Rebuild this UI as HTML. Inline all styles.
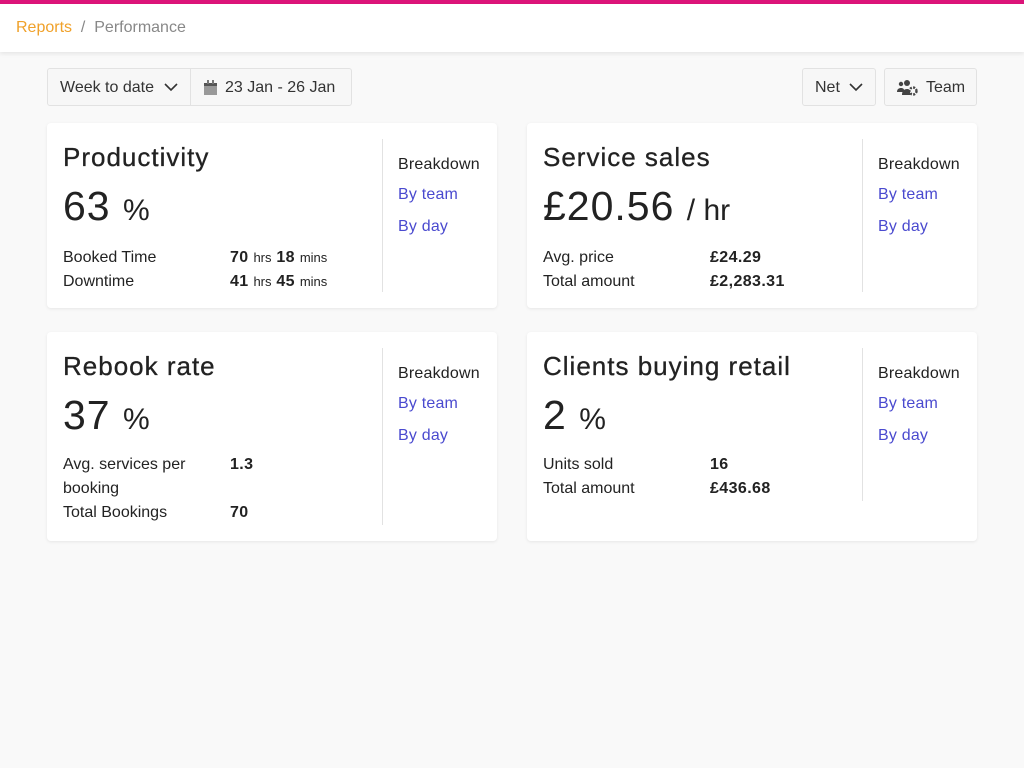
<!DOCTYPE html>
<html><head><meta charset="utf-8"><style>
*{box-sizing:border-box;margin:0;padding:0}
body{width:1024px;height:768px;background:#f9f9f9;font-family:"Liberation Sans",Arial,sans-serif;color:#222;position:relative;overflow:hidden}
.top{position:absolute;left:0;top:0;width:1024px;height:4px;background:#dc1479}
.hdr{position:absolute;left:0;top:4px;width:1024px;height:48px;background:#fff;box-shadow:0 2px 4px rgba(0,0,0,.08)}
.crumb{position:absolute;left:16px;top:15px;font-size:16px;color:#888}
.crumb .r{color:#f0a12a}
.btn{position:absolute;top:68px;height:38px;border:1px solid #e2e2e2;background:#f7f7f7;border-radius:3px;font-size:16px;color:#333;line-height:38px}
.card{position:absolute;background:#fff;border-radius:4px;box-shadow:0 1px 3px rgba(0,0,0,.08);width:450px}
.card .t{position:absolute;left:16px;top:19px;font-size:26px;color:#222;letter-spacing:1px;-webkit-text-stroke:0.3px #222}
.card .big{position:absolute;left:16px;top:60px;font-size:41px;color:#222;letter-spacing:1px}
.card .big small{font-size:30px;letter-spacing:0}
.card .div{position:absolute;left:335px;top:16px;width:1px;background:#e2e2e2}
.card .bd{position:absolute;left:351px;top:32px;font-size:16px;line-height:20px;letter-spacing:.2px}
.card .bd a{display:block;color:#4a4acf;text-decoration:none;margin-top:10px;margin-bottom:2px}
.card .bd a+a{margin-top:12px}
.rows{position:absolute;left:16px;font-size:16px;line-height:24px}
.rows div{position:relative}
.rows b{position:absolute;left:167px;top:0;white-space:nowrap;letter-spacing:.4px}
.rows b span{font-weight:normal;font-size:13px;letter-spacing:0}
</style></head><body>
<div class="top"></div>
<div class="hdr"><div class="crumb"><span class="r">Reports</span> &nbsp;/ &nbsp;Performance</div></div>

<div class="btn" style="left:47px;width:305px">
 <span style="position:absolute;left:12px">Week to date</span>
 <svg style="position:absolute;left:116px;top:13px" width="14" height="10" viewBox="0 0 14 10"><path d="M1 2l6 6 6-6" fill="none" stroke="#333" stroke-width="1.6"/></svg>
 <div style="position:absolute;left:142px;top:0;width:1px;height:36px;background:#e2e2e2"></div>
 <svg style="position:absolute;left:156px;top:11px" width="14" height="15" viewBox="0 0 14 15"><rect x="0" y="3" width="13" height="12" fill="#999"/><rect x="0" y="3" width="13" height="3" fill="#555"/><rect x="3" y="0" width="2" height="4" fill="#777"/><rect x="8" y="0" width="2" height="4" fill="#777"/></svg>
 <span style="position:absolute;left:177px">23 Jan - 26 Jan</span>
</div>
<div class="btn" style="left:802px;width:74px">
 <span style="position:absolute;left:12px">Net</span>
 <svg style="position:absolute;left:46px;top:13px" width="14" height="10" viewBox="0 0 14 10"><path d="M1 2l6 6 6-6" fill="none" stroke="#333" stroke-width="1.6"/></svg>
</div>
<div class="btn" style="left:884px;width:93px">
 <svg style="position:absolute;left:12px;top:10px" width="21" height="17" viewBox="0 0 21 17"><circle cx="4" cy="5" r="2.2" fill="#444"/><circle cx="10" cy="4" r="3" fill="#444"/><path d="M0 13c0-3 2-4 4-4s3 1 3 2v2z M5 16c0-4 2-6 5-6 2 0 3 1 3 2v4z" fill="#444"/><circle cx="16" cy="12" r="3.5" fill="none" stroke="#444" stroke-width="2.4" stroke-dasharray="2 1.3"/></svg>
 <span style="position:absolute;left:41px">Team</span>
</div>

<div class="card" style="left:47px;top:123px;height:185px">
 <div class="t">Productivity</div>
 <div class="big">63 <small>%</small></div>
 <div class="rows" style="top:123px">
  <div>Booked Time<b>70 <span>hrs</span> 18 <span>mins</span></b></div>
  <div>Downtime<b>41 <span>hrs</span> 45 <span>mins</span></b></div>
 </div>
 <div class="div" style="height:153px"></div>
 <div class="bd">Breakdown<a>By team</a><a>By day</a></div>
</div>

<div class="card" style="left:527px;top:123px;height:185px">
 <div class="t">Service sales</div>
 <div class="big">£20.56 <small>/ hr</small></div>
 <div class="rows" style="top:123px">
  <div>Avg. price<b>£24.29</b></div>
  <div>Total amount<b>£2,283.31</b></div>
 </div>
 <div class="div" style="height:153px"></div>
 <div class="bd">Breakdown<a>By team</a><a>By day</a></div>
</div>

<div class="card" style="left:47px;top:332px;height:209px">
 <div class="t">Rebook rate</div>
 <div class="big">37 <small>%</small></div>
 <div class="rows" style="top:121px">
  <div>Avg. services per<br>booking<b>1.3</b></div>
  <div>Total Bookings<b>70</b></div>
 </div>
 <div class="div" style="height:177px"></div>
 <div class="bd">Breakdown<a>By team</a><a>By day</a></div>
</div>

<div class="card" style="left:527px;top:332px;height:209px">
 <div class="t">Clients buying retail</div>
 <div class="big">2 <small>%</small></div>
 <div class="rows" style="top:121px">
  <div>Units sold<b>16</b></div>
  <div>Total amount<b>£436.68</b></div>
 </div>
 <div class="div" style="height:153px"></div>
 <div class="bd">Breakdown<a>By team</a><a>By day</a></div>
</div>
</body></html>
